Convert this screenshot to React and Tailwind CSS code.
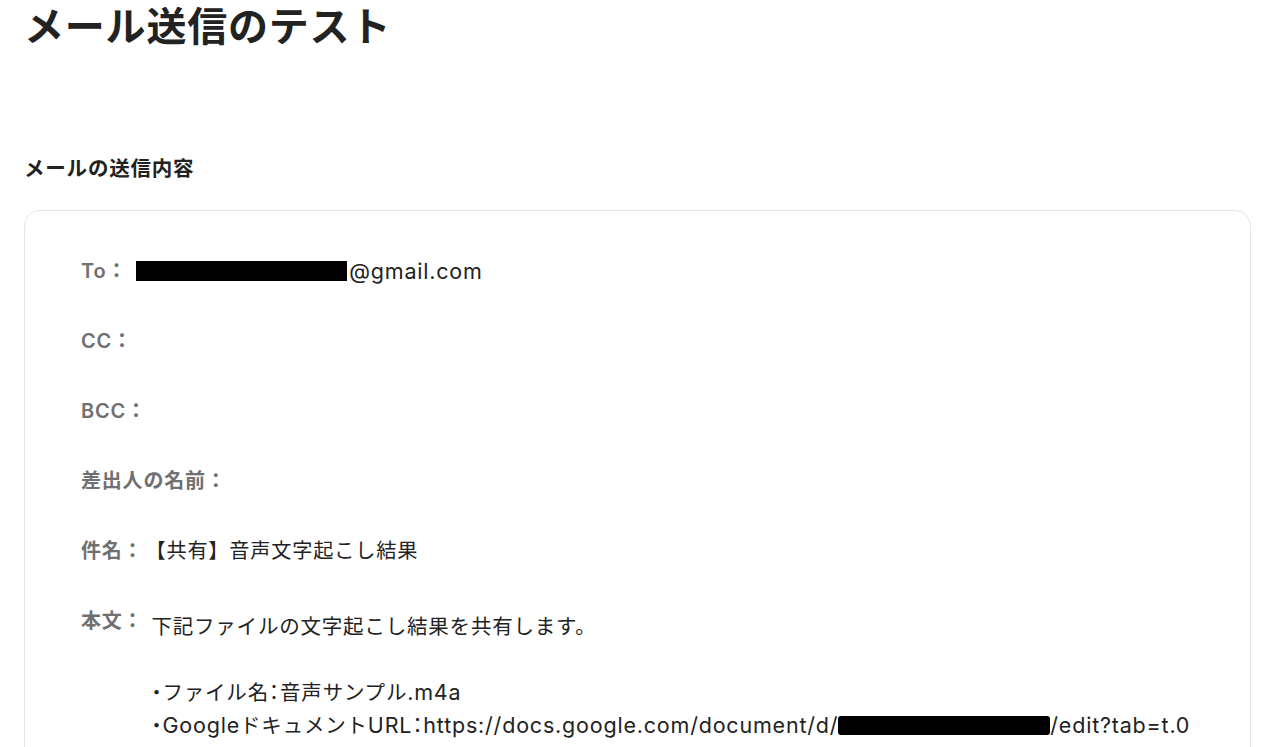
import React from 'react'

const font = { fontFamily: 'Inter, "Noto Sans CJK JP", sans-serif' }

function Row({ label, gap, children }) {
  return (
    <div className="flex items-center h-[36px] mb-[34px]">
      <span className="text-[20px] leading-[36px] font-semibold text-[#707070] shrink-0">{label}</span>
      <div className={`${gap} text-[20.2px] leading-[36px] text-[#222]`}>{children}</div>
    </div>
  )
}

// half-width punctuation used in the body text
function H({ children }) {
  return <span className="[font-feature-settings:'halt']">{children}</span>
}

// latin runs are set a little larger than the kana
function L({ children }) {
  return <span className="text-[21.5px]">{children}</span>
}

export default function App() {
  return (
    <div className="bg-white min-h-screen pl-6 pr-[17px] tracking-[0.05em]" style={font}>
      {/* Title */}
      <h1 className="text-[40px] leading-[54px] font-bold text-[#222]">メール送信のテスト</h1>

      {/* Section */}
      <h2 className="mt-[100px] text-[20.5px] leading-[30px] font-bold text-[#222]">メールの送信内容</h2>

      <div className="mt-[26px] border border-[#e5e5e5] rounded-2xl pt-[42px] px-14 pb-10">
        <Row label="To：" gap="ml-[9px]">
          <span className="flex items-center">
            <span className="inline-block w-[211px] h-[20px] bg-black"></span>
            <span className="ml-[2px]"><L>@gmail.com</L></span>
          </span>
        </Row>
        <Row label="CC：" />
        <Row label="BCC：" />
        <Row label="差出人の名前：" />
        <Row label="件名：" gap="ml-[2px]">【共有】音声文字起こし結果</Row>

        {/* Body */}
        <div className="flex items-start">
          <span className="text-[20px] leading-[36px] font-semibold text-[#707070] shrink-0">本文：</span>
          <div className="ml-[8px] mt-[7px] text-[20.5px] leading-[33px] text-[#222]">
            <p>下記ファイルの文字起こし結果を共有します。</p>
            <p>&nbsp;</p>
            <p><H>・</H>ファイル名<H>：</H>音声サンプル<L>.m4a</L></p>
            <p className="flex items-center">
              <span><H>・</H><L>Google</L>ドキュメント<L>URL</L><H>：</H><L>https://docs.google.com/document/d/</L></span>
              <span className="inline-block w-[212px] h-[19px] bg-black rounded-[3px]"></span>
              <L>/edit?tab=t.0</L>
            </p>
          </div>
        </div>
      </div>
    </div>
  )
}
